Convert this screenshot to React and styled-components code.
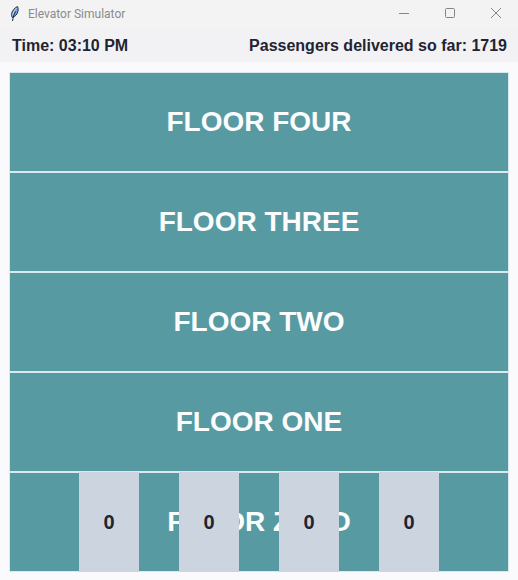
import React from "react";
import styled, { createGlobalStyle } from "styled-components";

const GlobalStyle = createGlobalStyle`
  * { box-sizing: border-box; }
  body {
    margin: 0;
    background: #fafafc;
    font-family: "Liberation Sans", Arial, sans-serif;
    color: #1f2430;
  }
`;

const Window = styled.div`
  display: flex;
  flex-direction: column;
  min-height: 100vh;
  background: #fafafc;
`;

const TitleBar = styled.header`
  display: flex;
  align-items: center;
  height: 28px;
  padding-left: 8px;
  background: #f3f3f3;
`;

const Title = styled.h1`
  flex: 1;
  margin: 0 0 0 6px;
  font: 400 12px/16px Roboto, "Noto Sans", sans-serif;
  color: #8b8b8b;
`;

const WindowButton = styled.button`
  display: flex;
  align-items: center;
  justify-content: center;
  width: 46px;
  height: 28px;
  padding: 0 0 2px 2px;
  border: 0;
  background: transparent;
  color: #858585;
`;

const StatusBar = styled.div`
  display: flex;
  align-items: center;
  justify-content: space-between;
  height: 34px;
  padding: 2px 11px 0 12px;
  background: #f2f2f5;
  font-size: 16px;
  line-height: 20px;
  font-weight: 700;
`;

const Building = styled.main`
  position: relative;
  margin: 10px 9px 8px;
`;

const Floor = styled.section`
  display: flex;
  align-items: center;
  justify-content: center;
  height: 100px;
  border: 1px solid #d8eaf0;
  background: #589aa1;
`;

const FloorName = styled.h2`
  margin: 0;
  font-size: 28px;
  line-height: 32px;
  font-weight: 700;
  color: #fafcfd;
`;

const Shafts = styled.div`
  position: absolute;
  inset: auto 0 0;
  display: flex;
  justify-content: center;
  gap: 40px;
`;

const Car = styled.div`
  display: flex;
  align-items: center;
  justify-content: center;
  width: 60px;
  height: 100px;
  background: #ccd4df;
  font-size: 20px;
  line-height: 24px;
  font-weight: 700;
`;

const floors = ["FOUR", "THREE", "TWO", "ONE", "ZERO"];
const cars = [0, 0, 0, 0];

function FeatherIcon() {
  return (
    <svg width="14" height="18" viewBox="0 0 14 18" aria-hidden="true">
      <path
        d="M9.5 1.500C7 2.500 4.200 5.500 3.600 8.500c-.3 1.600 0 3 .8 4C7.500 11.500 9.500 9 10 6.200c.4-1.800.2-3.600-.5-4.700Z"
        fill="#6f9be0"
        stroke="#22252c"
        strokeWidth="0.9"
      />
      <path d="M8.600 3C6.500 5 5 8 4.700 10.500" fill="none" stroke="#d3e3f8" strokeWidth="0.9" />
      <path d="M7.500 6.500C6 9.500 5 12 4.600 16" fill="none" stroke="#22252c" strokeWidth="1" />
    </svg>
  );
}

function MinimizeIcon() {
  return (
    <svg width="12" height="12" viewBox="0 0 12 12" aria-hidden="true">
      <path d="M1 6.500h10" stroke="currentColor" />
    </svg>
  );
}

function MaximizeIcon() {
  return (
    <svg width="12" height="12" viewBox="0 0 12 12" aria-hidden="true">
      <rect x="1.500" y="1.500" width="9" height="9" rx="1" fill="none" stroke="currentColor" />
    </svg>
  );
}

function CloseIcon() {
  return (
    <svg width="12" height="12" viewBox="0 0 12 12" aria-hidden="true">
      <path d="M1 1l10 10M11 1L1 11" stroke="currentColor" />
    </svg>
  );
}

export default function App() {
  return (
    <>
      <GlobalStyle />
      <Window>
        <TitleBar>
          <FeatherIcon />
          <Title>Elevator Simulator</Title>
          <WindowButton aria-label="Minimize"><MinimizeIcon /></WindowButton>
          <WindowButton aria-label="Maximize"><MaximizeIcon /></WindowButton>
          <WindowButton aria-label="Close"><CloseIcon /></WindowButton>
        </TitleBar>
        <StatusBar>
          <span>Time: 03:10 PM</span>
          <span>Passengers delivered so far: 1719</span>
        </StatusBar>
        <Building>
          {floors.map((name) => (
            <Floor key={name}>
              <FloorName>FLOOR {name}</FloorName>
            </Floor>
          ))}
          <Shafts>
            {cars.map((passengers, index) => (
              <Car key={index}>{passengers}</Car>
            ))}
          </Shafts>
        </Building>
      </Window>
    </>
  );
}
